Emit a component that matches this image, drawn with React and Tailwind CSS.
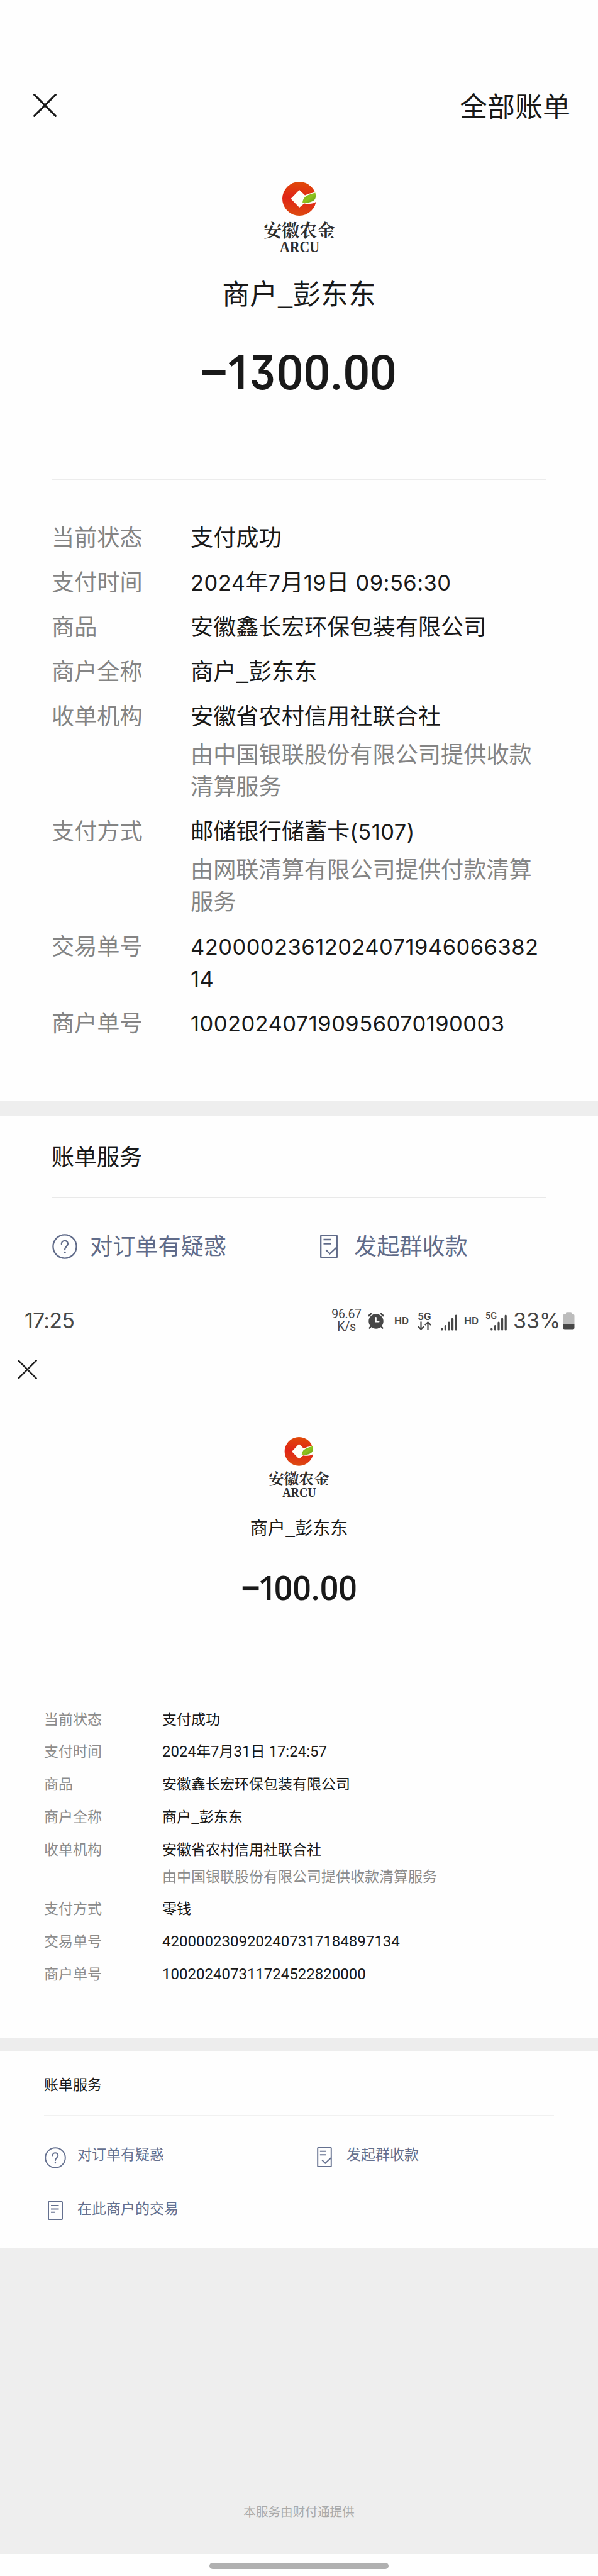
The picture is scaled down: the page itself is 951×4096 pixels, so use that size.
import React from "react";

const CJK = "font-['Noto_Sans_CJK_SC',sans-serif]";

function CloseIcon({ className }) {
  return (
    <svg viewBox="0 0 36 36" className={className} fill="none" stroke="currentColor" strokeWidth="3" strokeLinecap="round">
      <path d="M1.6 1.6 L34.4 34.4 M34.4 1.6 L1.6 34.4" />
    </svg>
  );
}

function BankLogo({ id, className }) {
  return (
    <svg viewBox="0 0 112 112" className={className}>
      <defs>
        <linearGradient id={id + "r"} x1="0.6" y1="0" x2="0.5" y2="1">
          <stop offset="0" stopColor="#e04a08" />
          <stop offset="0.5" stopColor="#e02416" />
          <stop offset="1" stopColor="#dd4a10" />
        </linearGradient>
        <linearGradient id={id + "g"} x1="0" y1="0" x2="1" y2="1">
          <stop offset="0" stopColor="#6fa512" />
          <stop offset="0.5" stopColor="#8fc31f" />
          <stop offset="1" stopColor="#5f9a12" />
        </linearGradient>
      </defs>
      <circle cx="56" cy="27" r="27" fill={`url(#${id}r)`} />
      <path d="M56 13 L65 21.5 Q72 18 78 17.5 L84 13 L84 31 L79 34 Q72 36 64 34.5 L56 41 L42.500 27 Z" fill="#fffef8" />
      <path d="M61 34 C61.500 24 68 21 81.500 17.500 C83.500 28 81 33 61 34 Z" fill={`url(#${id}g)`} />
      <text x="56" y="88.200" textAnchor="middle" textLength="113" lengthAdjust="spacing" fontSize="28.500" fontWeight="700" fill="#2e2e2e" className="font-['Noto_Serif_CJK_SC','Noto_Sans_CJK_SC',serif]">安徽农金</text>
      <text x="56.500" y="111.500" textAnchor="middle" textLength="63" lengthAdjust="spacingAndGlyphs" fontSize="24.500" fontWeight="700" fill="#2e2e2e" className="font-['Liberation_Serif',serif]">ARCU</text>
    </svg>
  );
}

function QuestionIcon({ className }) {
  return (
    <svg viewBox="0 0 40 40" className={className} fill="none" stroke="currentColor" strokeWidth="2.300" strokeLinecap="round">
      <circle cx="20" cy="20" r="18.600" />
      <path d="M14.800 16 C14.800 9.200 25 9.200 25 15.800 C25 19.500 20 20.500 20 25" />
      <circle cx="20" cy="29.300" r="1.500" fill="currentColor" stroke="none" />
    </svg>
  );
}

function CheckDocIcon({ className }) {
  return (
    <svg viewBox="0 0 28 38" className={className} fill="none" stroke="currentColor" strokeWidth="2.300">
      <path d="M26.800 20 V2.200 Q26.800 1.200 25.800 1.200 H2.200 Q1.200 1.200 1.200 2.200 V35.800 Q1.200 36.800 2.200 36.800 H25.800 Q26.800 36.800 26.800 35.800 V20 L15.500 30.500 L9.500 24.500" />
      <path d="M5.500 8 H17 M5.500 14.500 H17" />
    </svg>
  );
}

function ListDocIcon({ className }) {
  return (
    <svg viewBox="0 0 24 30" className={className} fill="none" stroke="currentColor" strokeWidth="2">
      <rect x="1" y="1" width="22" height="28" rx="0.800" />
      <path d="M5 7 H17.500 M5 12.500 H17.500 M5 17.800 H11" />
    </svg>
  );
}

function AlarmIcon() {
  return (
    <svg viewBox="0 0 26 26" className="h-[26px] w-[26px]" fill="none" stroke="#474747" strokeLinecap="round">
      <circle cx="13" cy="14" r="11.700" fill="#474747" stroke="none" />
      <path d="M1.800 5 L4.800 2 M24.200 5 L21.200 2" strokeWidth="2.600" />
      <path d="M5 22 L2.800 24.500 M21 22 L23.200 24.500" strokeWidth="2.600" />
      <path d="M12.800 8 V14.500 H17.500" stroke="#fefefe" strokeWidth="2" />
    </svg>
  );
}

function SignalIcon() {
  return (
    <svg viewBox="0 0 26 26" className="h-[26px] w-[26px]" stroke="#474747" strokeWidth="3.200" strokeLinecap="round">
      <path d="M1.800 23 V24 M7.400 18.500 V24 M13 13 V24 M18.600 7 V24 M24.200 2.200 V24" />
    </svg>
  );
}

function ArrowsIcon() {
  return (
    <svg viewBox="0 0 22 14" className="h-[14px] w-[22px]" fill="none" stroke="#474747" strokeWidth="2.200">
      <path d="M5.500 0.500 V12 M0.800 8 L5.500 12.500 L10.200 8 M16.500 13.500 V2 M11.800 6 L16.500 1.500 L21.200 6" />
    </svg>
  );
}

function BatteryIcon() {
  return (
    <svg viewBox="0 0 19 28" className="h-[28px] w-[19px]">
      <path d="M5 1.500 Q5 0.300 6.500 0.300 H12.500 Q14 0.300 14 1.500 V3.500 H16 Q18.500 3.500 18.500 6 V20 H0.500 V6 Q0.500 3.500 3 3.500 H5 Z" fill="#bcbcbc" />
      <path d="M0.500 20 H18.500 V25 Q18.500 27.500 16 27.500 H3 Q0.500 27.500 0.500 25 Z" fill="#474747" />
    </svg>
  );
}

function Row1({ label, children, notes }) {
  return (
    <div className="flex">
      <div className="w-[221px] shrink-0 text-[#848484]">{label}</div>
      <div className="whitespace-nowrap">
        <div>{children}</div>
        {notes && <div className="mt-[10px] text-[#848484]">{notes}</div>}
      </div>
    </div>
  );
}

function Row2({ label, children, note }) {
  return (
    <div className="flex">
      <div className="w-[188px] shrink-0 text-[#8c8c8c]">{label}</div>
      <div className="whitespace-nowrap">
        <div>{children}</div>
        {note && <div className="mt-[6px] text-[#8c8c8c]">{note}</div>}
      </div>
    </div>
  );
}

const N1 = ({ children }) => <span className="font-['Inter',sans-serif] text-[34.5px] leading-none tracking-[0.45px]">{children}</span>;
const N2 = ({ children }) => <span className="font-['Roboto',sans-serif] text-[24px] leading-none">{children}</span>;

/* Sign and leading digit share a sans with a plain slanted flag on the 1. */
function SignedOne({ signTracking, oneTracking }) {
  return (
    <>
      <span className={"font-['Open_Sans',sans-serif] leading-none font-bold " + signTracking}>−</span>
      <span className={"font-['Open_Sans',sans-serif] leading-none font-semibold " + oneTracking}>1</span>
    </>
  );
}

function FirstBill() {
  return (
    <section>
      <header className="flex h-[200px] items-center justify-between pt-[134px] pr-[44px] pl-[53px]">
        <CloseIcon className="h-[37px] w-[37px]" />
        <div className="text-[44px] leading-[60px]">全部账单</div>
      </header>
      <div className="mt-[89px] flex justify-center">
        <BankLogo id="a" className="h-[112px] w-[112px] overflow-visible" />
      </div>
      <div className="mt-[34px] text-center text-[44px] leading-[60px]">商户_彭东东</div>
      <div className="mt-[57px] h-[80px] pr-[2px] text-center font-['Roboto',sans-serif] text-[76px] leading-[80px] font-medium tracking-[-0.6px] whitespace-nowrap">
        <SignedOne signTracking="tracking-[-3.8px]" oneTracking="tracking-[-4.6px]" />
        <span className="inline-block w-[42.5px] origin-left scale-x-[0.86] font-['Inter',sans-serif] text-[74px] leading-none font-semibold [font-feature-settings:'cv09']">3</span>
        <span>00.00</span>
      </div>
      <div className="mx-[82px] mt-[130px] h-[2px] bg-[#ececec]" />
      <div className="mt-[63px] flex flex-col gap-[20px] pl-[82px] text-[36.2px] leading-[51px]">
        <Row1 label="当前状态">支付成功</Row1>
        <Row1 label="支付时间"><N1>2024</N1>年<N1>7</N1>月<N1>19</N1>日<N1> 09:56:30</N1></Row1>
        <Row1 label="商品">安徽鑫长宏环保包装有限公司</Row1>
        <Row1 label="商户全称">商户_彭东东</Row1>
        <Row1 label="收单机构" notes={<>由中国银联股份有限公司提供收款<br />清算服务</>}>安徽省农村信用社联合社</Row1>
        <Row1 label="支付方式" notes={<>由网联清算有限公司提供付款清算<br />服务</>}>邮储银行储蓄卡<N1>(5107)</N1></Row1>
        <Row1 label="交易单号"><N1>42000023612024071946066382<br />14</N1></Row1>
        <Row1 label="商户单号"><N1>100202407190956070190003</N1></Row1>
      </div>
      <div className="mt-[101px] h-[23px] bg-[#eeeeee]" />
      <div className="mt-[38px] pl-[82px] text-[36px] leading-[51px]">账单服务</div>
      <div className="mx-[82px] mt-[40px] h-[2px] bg-[#e9e9e9]" />
      <div className="mt-[52px] flex h-[50px] items-center pl-[83px] text-[36.2px] leading-[44px] text-[#606b89]">
        <QuestionIcon className="h-[40px] w-[40px]" />
        <div className="ml-[20px] w-[366px] pb-[6px]">对订单有疑惑</div>
        <CheckDocIcon className="h-[38px] w-[28px]" />
        <div className="ml-[26px] pb-[6px]">发起群收款</div>
      </div>
    </section>
  );
}

function StatusBar() {
  return (
    <div className="flex h-[40px] items-center pl-[39px] font-['Roboto',sans-serif] text-[#474747]">
      <div className="w-[487px] font-['Inter',sans-serif] text-[34px] leading-[40px] tracking-[-0.8px]">17:25</div>
      <div className="w-[50px] text-center text-[19.5px] leading-[20px] tracking-[-0.3px]">96.67<br />K/s</div>
      <div className="ml-[9px]"><AlarmIcon /></div>
      <div className="ml-[16px] w-[23px] text-[17px] leading-[20px] font-semibold">HD</div>
      <div className="ml-[13px] flex w-[24px] flex-col items-center text-[17px] leading-[16px] font-semibold">
        <span>5G</span>
        <ArrowsIcon />
      </div>
      <div className="mt-[5px] ml-[13.5px]"><SignalIcon /></div>
      <div className="ml-[11.5px] w-[23px] text-[17px] leading-[20px] font-semibold">HD</div>
      <div className="relative mt-[5px] ml-[19px]">
        <SignalIcon />
        <span className="absolute -top-[5px] -left-[8px] text-[14.5px] leading-[16px] font-medium">5G</span>
      </div>
      <div className="ml-[10px] w-[79px] font-['Inter',sans-serif] text-[34px] leading-[40px]">33%</div>
      <BatteryIcon />
    </div>
  );
}

function SecondBill() {
  return (
    <section>
      <div className="mt-[42px] pl-[28px]">
        <CloseIcon className="h-[31px] w-[31px] text-[#222222]" />
      </div>
      <div className="mt-[92px] flex justify-center">
        <BankLogo id="b" className="h-[95px] w-[95px] overflow-visible" />
      </div>
      <div className="mt-[28px] text-center text-[28px] leading-[40px]">商户_彭东东</div>
      <div className="mt-[49px] h-[54px] text-center font-['Roboto',sans-serif] text-[53px] leading-[54px] font-medium tracking-[-0.6px] whitespace-nowrap">
        <SignedOne signTracking="tracking-[-3.8px]" oneTracking="tracking-[-4.8px]" />
        <span>00.00</span>
      </div>
      <div className="mx-[69px] mt-[110px] h-px bg-[#e6e6e6]" />
      <div className="mt-[51.500px] flex flex-col gap-[14.800px] pl-[70px] text-[23px] leading-[37px]">
        <Row2 label="当前状态">支付成功</Row2>
        <Row2 label="支付时间"><N2>2024</N2>年<N2>7</N2>月<N2>31</N2>日<N2> 17:24:57</N2></Row2>
        <Row2 label="商品">安徽鑫长宏环保包装有限公司</Row2>
        <Row2 label="商户全称">商户_彭东东</Row2>
        <Row2 label="收单机构" note="由中国银联股份有限公司提供收款清算服务">安徽省农村信用社联合社</Row2>
        <Row2 label="支付方式">零钱</Row2>
        <Row2 label="交易单号"><N2>4200002309202407317184897134</N2></Row2>
        <Row2 label="商户单号"><N2>100202407311724522820000</N2></Row2>
      </div>
      <div className="mt-[85px] h-[20px] bg-[#ededed]" />
      <div className="mt-[34px] pl-[70px] text-[23px] leading-[37px]">账单服务</div>
      <div className="mx-[70px] mt-[31px] h-[2px] bg-[#f1f1f1]" />
      <div className="mt-[49px] grid h-[160px] grid-cols-[433px_1fr] grid-rows-[86px_74px] pl-[71px] text-[23px] leading-[20px] text-[#64708f]">
        <div className="flex items-start">
          <QuestionIcon className="h-[34px] w-[34px]" />
          <div className="ml-[18px]">对订单有疑惑</div>
        </div>
        <div className="flex items-start">
          <CheckDocIcon className="h-[32px] w-[24px]" />
          <div className="ml-[23px]">发起群收款</div>
        </div>
        <div className="flex items-start pl-[5px]">
          <ListDocIcon className="h-[30px] w-[24px]" />
          <div className="ml-[23px]">在此商户的交易</div>
        </div>
      </div>
    </section>
  );
}

export default function App() {
  return (
    <div className={"h-[4096px] w-[951px] overflow-hidden bg-[#fefefe] text-[#191919] " + CJK}>
      <FirstBill />
      <div className="h-[73px]" />
      <StatusBar />
      <SecondBill />
      <footer>
        <div className="flex h-[487px] items-end justify-center bg-[#eeeeee] pb-[54px] text-[19.6px] leading-[28px] text-[#aaaaaa]">本服务由财付通提供</div>
        <div className="flex h-[35px] justify-center pt-[14px]">
          <div className="h-[10px] w-[285px] rounded-[5px] bg-[#b0b0b0]" />
        </div>
      </footer>
    </div>
  );
}
